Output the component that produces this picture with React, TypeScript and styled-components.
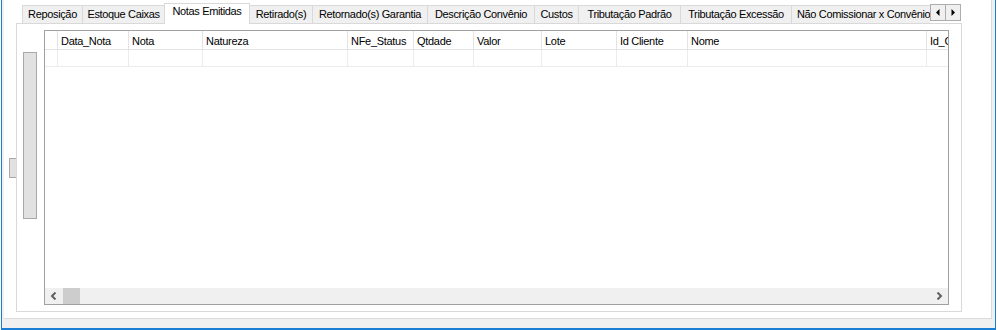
import React from 'react';
import styled, { createGlobalStyle } from 'styled-components';

const GlobalStyle = createGlobalStyle`
  html, body {
    margin: 0;
    padding: 0;
    background: #ffffff;
  }
  body {
    font-family: "Liberation Sans", Arial, sans-serif;
    font-size: 11px;
    color: #000000;
  }
`;

const Screen = styled.div`
  display: flex;
  width: 999px;
  height: 330px;
  background: #ffffff;
  overflow: hidden;
`;

const Window = styled.div`
  display: flex;
  box-sizing: border-box;
  margin-left: 1px;
  width: 995px;
  height: 330px;
  padding: 0 3px 9px 2px;
  background: #f0f0f0;
  border-left: 1px solid #1a7fd4;
  border-right: 1px solid #1a7fd4;
  border-bottom: 2px solid #1a7fd4;
`;

const Panel = styled.div`
  display: flex;
  align-items: flex-start;
  box-sizing: border-box;
  width: 988px;
  height: 319px;
  background: #ffffff;
  border-right: 1px solid #dadada;
  border-bottom: 1px solid #dadada;
`;

const Grip = styled.div`
  box-sizing: border-box;
  margin: 158px 0 0 5px;
  width: 7px;
  height: 20px;
  background: #e1e1e1;
  border: 1px solid #a9a9a9;
  border-right: none;
`;

const TabControl = styled.div`
  display: flex;
  flex-direction: column;
  width: 946px;
`;

const Strip = styled.div`
  display: flex;
  height: 24px;
`;

const TabList = styled.div`
  display: flex;
  align-items: flex-end;
  box-sizing: border-box;
  width: 914px;
  height: 24px;
  padding-left: 6px;
  overflow: hidden;
`;

const Tab = styled.div<{ $w: number; $active?: boolean; $clip?: boolean }>`
  flex: none;
  display: flex;
  justify-content: ${p => (p.$clip ? 'flex-start' : 'center')};
  box-sizing: border-box;
  width: ${p => p.$w}px;
  height: ${p => (p.$active ? 21 : 18)}px;
  margin-bottom: ${p => (p.$active ? 0 : 1)}px;
  margin-left: -1px;
  padding-top: ${p => (p.$active ? 1 : 2)}px;
  padding-left: ${p => (p.$clip ? 5 : 0)}px;
  line-height: 13px;
  letter-spacing: -0.35px;
  white-space: nowrap;
  overflow: hidden;
  background: ${p => (p.$active ? '#ffffff' : '#f0f0f0')};
  border: 1px solid #d9d9d9;
  border-bottom: none;
  position: ${p => (p.$active ? 'relative' : 'static')};
  z-index: ${p => (p.$active ? 1 : 'auto')};

  &:first-child {
    margin-left: 0;
  }
`;

const Scroller = styled.div`
  display: flex;
  margin-top: 4px;
  height: 17px;
`;

const ScrollButton = styled.div`
  display: flex;
  align-items: center;
  justify-content: center;
  box-sizing: border-box;
  width: 16px;
  height: 17px;
  background: #f0f0f0;
  border: 1px solid #adadad;

  & + & {
    margin-left: -1px;
  }
`;

const Page = styled.div`
  display: flex;
  align-items: flex-start;
  box-sizing: border-box;
  margin-top: -1px;
  height: 289px;
  background: #ffffff;
  border: 1px solid #d9d9d9;
`;

const SideBar = styled.div`
  box-sizing: border-box;
  margin: 28px 0 0 6px;
  width: 14px;
  height: 167px;
  background: #e1e1e1;
  border: 1px solid #a9a9a9;
`;

const Grid = styled.div`
  display: flex;
  flex-direction: column;
  box-sizing: border-box;
  margin: 6px 0 0 7px;
  width: 905px;
  height: 275px;
  border: 1px solid #a0a0a0;
  overflow: hidden;
`;

const Row = styled.div<{ $head?: boolean }>`
  display: flex;
  flex: none;
  height: ${p => (p.$head ? 19 : 17)}px;
`;

const Cell = styled.div<{ $w: number; $head?: boolean }>`
  flex: none;
  box-sizing: border-box;
  width: ${p => p.$w}px;
  padding: ${p => (p.$head ? '4px 0 0 3px' : '0')};
  line-height: 13px;
  letter-spacing: -0.3px;
  white-space: nowrap;
  overflow: hidden;
  border-right: 1px solid ${p => (p.$head ? '#e3e3e3' : '#ececec')};
  border-bottom: 1px solid ${p => (p.$head ? '#e3e3e3' : '#ececec')};
`;

const Filler = styled.div`
  flex: 1;
`;

const HScroll = styled.div`
  display: flex;
  flex: none;
  height: 16px;
  background: #f0f0f0;
`;

const ArrowBox = styled.div`
  display: flex;
  align-items: center;
  justify-content: center;
  width: 17px;
`;

const Thumb = styled.div`
  margin-left: 1px;
  width: 17px;
  background: #cdcdcd;
`;

const Track = styled.div`
  flex: 1;
`;

const tabs = [
  { label: 'Reposição', w: 61 },
  { label: 'Estoque Caixas', w: 83 },
  { label: 'Notas Emitidas', w: 86, active: true },
  { label: 'Retirado(s)', w: 64 },
  { label: 'Retornado(s) Garantia', w: 116 },
  { label: 'Descrição Convênio', w: 108 },
  { label: 'Custos', w: 45 },
  { label: 'Tributação Padrão', w: 103 },
  { label: 'Tributação Excessão', w: 112 },
  { label: 'Não Comissionar x Convênio', w: 160, clip: true },
];

const columns = [
  { name: '', w: 13 },
  { name: 'Data_Nota', w: 71 },
  { name: 'Nota', w: 74 },
  { name: 'Natureza', w: 145 },
  { name: 'NFe_Status', w: 66 },
  { name: 'Qtdade', w: 60 },
  { name: 'Valor', w: 68 },
  { name: 'Lote', w: 75 },
  { name: 'Id Cliente', w: 71 },
  { name: 'Nome', w: 239 },
  { name: 'Id_Cliente_Conv', w: 90 },
];

const Triangle = ({ dir }: { dir: 'left' | 'right' }) => (
  <svg width="4" height="7" viewBox="0 0 4 7">
    {dir === 'left'
      ? <polygon points="3.5,0 0,3.5 3.5,7" fill="#000" />
      : <polygon points="0.5,0 4,3.5 0.5,7" fill="#000" />}
  </svg>
);

const Chevron = ({ dir }: { dir: 'left' | 'right' }) => (
  <svg width="7" height="8" viewBox="0 0 7 8">
    <polyline
      points={dir === 'left' ? '5.5,0.5 2,4 5.5,7.5' : '1.5,0.5 5,4 1.5,7.5'}
      fill="none"
      stroke="#606060"
      strokeWidth="2"
    />
  </svg>
);

export default function App() {
  return (
    <Screen>
      <GlobalStyle />
      <Window>
        <Panel>
          <Grip />
          <TabControl>
            <Strip>
              <TabList>
                {tabs.map(t => (
                  <Tab key={t.label} $w={t.w} $active={t.active} $clip={t.clip}>{t.label}</Tab>
                ))}
              </TabList>
              <Scroller>
                <ScrollButton><Triangle dir="left" /></ScrollButton>
                <ScrollButton><Triangle dir="right" /></ScrollButton>
              </Scroller>
            </Strip>
            <Page>
              <SideBar />
              <Grid>
                <Row $head>
                  {columns.map((c, i) => (
                    <Cell key={i} $w={c.w} $head>{c.name}</Cell>
                  ))}
                </Row>
                <Row>
                  {columns.map((c, i) => (
                    <Cell key={i} $w={c.w} />
                  ))}
                </Row>
                <Filler />
                <HScroll>
                  <ArrowBox><Chevron dir="left" /></ArrowBox>
                  <Thumb />
                  <Track />
                  <ArrowBox><Chevron dir="right" /></ArrowBox>
                </HScroll>
              </Grid>
            </Page>
          </TabControl>
        </Panel>
      </Window>
    </Screen>
  );
}
